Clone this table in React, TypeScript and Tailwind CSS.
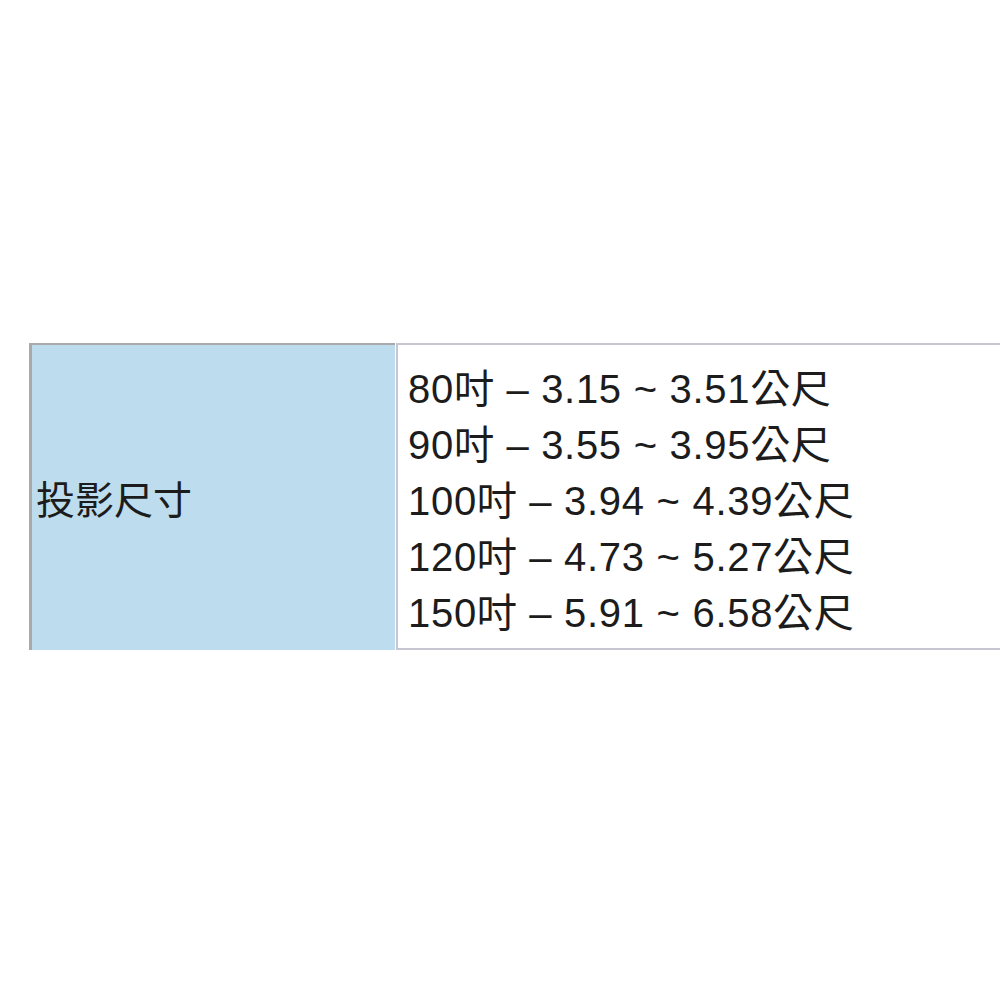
import React from "react";

const rows = [
  "80吋 – 3.15 ~ 3.51公尺",
  "90吋 – 3.55 ~ 3.95公尺",
  "100吋 – 3.94 ~ 4.39公尺",
  "120吋 – 4.73 ~ 5.27公尺",
  "150吋 – 5.91 ~ 6.58公尺",
];

export default function App() {
  return (
    <div
      className="w-[1000px] h-[1000px] overflow-hidden bg-white pt-[343px] pl-[29px] text-[#1c1c1c]"
      style={{ fontFamily: '"Liberation Sans", Arial, "Noto Sans CJK TC", sans-serif' }}
    >
      <div className="flex h-[307px] w-[1100px]">
        <div className="w-[366px] shrink-0 bg-[#bddced] border-l-[3px] border-t-[2px] border-[#a9a9ab] flex items-center pl-[4px] text-[39px]">
          <span style={{ fontFamily: '"Noto Sans CJK TC", sans-serif' }}>投影尺寸</span>
        </div>
        <div className="ml-[1px] flex-1 border-l-[2px] border-t-[2px] border-b-[2px] border-[#c6c6d2] flex flex-col justify-center pl-[10px] pt-[8px] text-[40px] leading-[56px] tracking-[0.7px]">
          {rows.map((r) => (
            <div key={r}>{r}</div>
          ))}
        </div>
      </div>
    </div>
  );
}
